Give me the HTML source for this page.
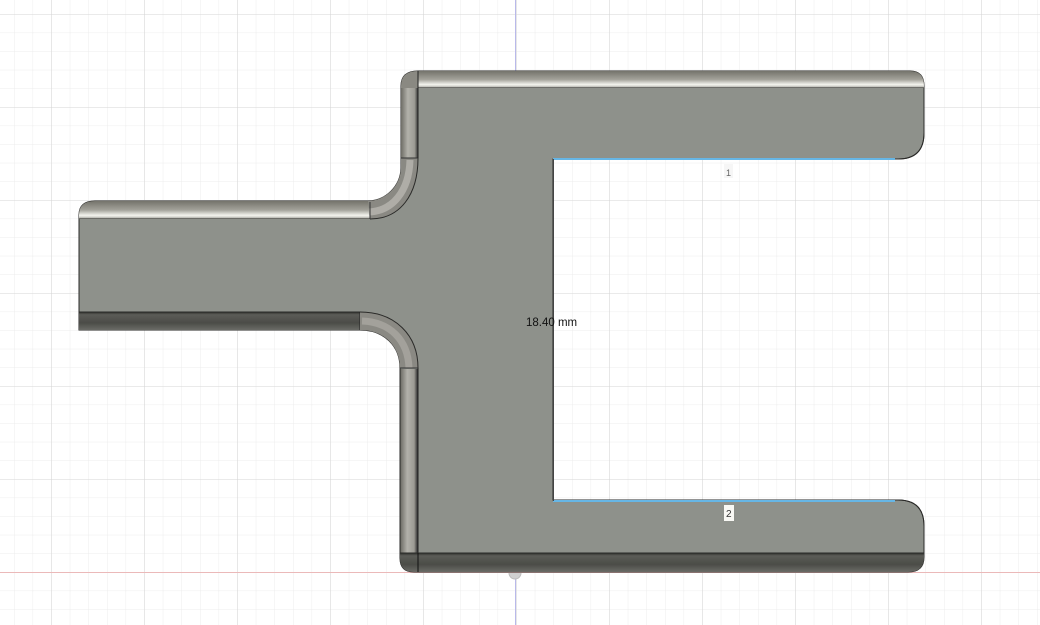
<!DOCTYPE html>
<html><head><meta charset="utf-8"><style>
html,body{margin:0;padding:0;background:#fff;width:1040px;height:625px;overflow:hidden}
svg{display:block}
</style></head><body>
<svg width="1040" height="625" viewBox="0 0 1040 625" xmlns="http://www.w3.org/2000/svg">
<defs>
<pattern id="minor" x="14" y="14" width="18.6" height="18.6" patternUnits="userSpaceOnUse">
<path d="M0 0H18.6M0 0V18.6" stroke="#ececec" stroke-width="1" fill="none"/>
</pattern>
<pattern id="major" x="51" y="14" width="93" height="93" patternUnits="userSpaceOnUse">
<path d="M0 0H93M0 0V93" stroke="#d6d6d6" stroke-width="1" fill="none"/>
</pattern>
<linearGradient id="topb" x1="0" y1="0" x2="0" y2="1">
<stop offset="0" stop-color="#74736b"/><stop offset="0.5" stop-color="#a3a29a"/><stop offset="0.8" stop-color="#f4f4ee"/><stop offset="0.92" stop-color="#c9c9c3"/><stop offset="1" stop-color="#3a3a36"/>
</linearGradient>
<linearGradient id="leftb" x1="0" y1="0" x2="1" y2="0">
<stop offset="0" stop-color="#6e6d66"/><stop offset="0.4" stop-color="#b2b1aa"/><stop offset="0.8" stop-color="#9c9b94"/><stop offset="1" stop-color="#333"/>
</linearGradient>
<linearGradient id="botb" x1="0" y1="0" x2="0" y2="1">
<stop offset="0" stop-color="#2f302c"/><stop offset="0.15" stop-color="#5b5c57"/><stop offset="0.6" stop-color="#4b4c47"/><stop offset="1" stop-color="#6a6b66"/>
</linearGradient>
</defs>
<rect width="1040" height="625" fill="#fff"/>
<rect width="1040" height="625" fill="url(#minor)"/>
<rect width="1040" height="625" fill="url(#major)"/>
<line x1="515.5" y1="0" x2="515.5" y2="625" stroke="#b9b9ea" stroke-width="1"/>
<line x1="0" y1="572.5" x2="1040" y2="572.5" stroke="#ebb9b9" stroke-width="1"/>

<!-- silhouette -->
<path d="M79 215 Q79 201 95 201 L368 201 A34 34 0 0 0 401 168 L401 86 Q401 71 418 71 L910 71 Q924 71 924 86 L924 133 Q924 159 898 159 L553 159 L553 500 L898 500 Q924 500 924 526 L924 557 Q924 572 908 572 L414 572 Q400 572 400 558 L400 368 C400 346 384 330 360 330 L79 330 Z" fill="#8e918b" stroke="#2a2a28" stroke-width="1"/>
<!-- left arm bottom band -->
<path d="M79 312 L360 312 L360 330 L79 330 Z" fill="url(#botb)"/>
<line x1="79" y1="312" x2="360" y2="312" stroke="#2a2a28"/>
<line x1="360" y1="312" x2="360" y2="330" stroke="#222"/>
<!-- lower fillet band -->
<path d="M360 312 C395 312 418 335 418 368 L400 368 C400 346 384 330 360 330 Z" fill="#8a8983"/>
<path d="M362 321 C390 322 408 340 409 368" fill="none" stroke="#a9a8a1" stroke-width="7" opacity="0.8"/>
<path d="M360 312 C395 312 418 335 418 368" fill="none" stroke="#2a2a28"/>
<line x1="400" y1="368" x2="418" y2="368" stroke="#333"/>
<!-- left arm top band -->
<path d="M79 219 L79 215 Q79 201 95 201 L370 201 L370 219 Z" fill="url(#topb)"/>
<!-- top fillet band -->
<path d="M368 201 A34 34 0 0 0 401 168 L401 158 L418 158 C418 195 400 219 370 219 Z" fill="#8a8983"/>
<path d="M369 212 C392 211 409 192 410 160" fill="none" stroke="#b8b7b0" stroke-width="7" opacity="0.8"/>
<path d="M418 158 C418 195 400 219 370 219" fill="none" stroke="#2a2a28"/>
<line x1="370" y1="202" x2="370" y2="219" stroke="#333"/>
<!-- vertical left band top -->
<rect x="401" y="86" width="17" height="72" fill="url(#leftb)"/>
<line x1="401" y1="158" x2="418" y2="158" stroke="#333"/>
<!-- top band -->
<path d="M418 71 L910 71 Q924 71 924 86 L924 88 L418 88 Z" fill="url(#topb)"/>
<path d="M401 88 L401 86 Q401 71 418 71 L418 88 Z" fill="#8a8982"/>
<!-- vertical left band bottom -->
<rect x="400.5" y="369" width="17" height="184" fill="url(#leftb)"/>
<line x1="418" y1="71" x2="418" y2="158" stroke="#222"/>
<line x1="418" y1="368" x2="418" y2="572" stroke="#222"/>
<!-- bottom band -->
<path d="M400 553 L924 553 L924 557 Q924 572 908 572 L414 572 Q400 572 400 558 Z" fill="url(#botb)"/>
<line x1="400" y1="553" x2="924" y2="553" stroke="#2a2a28"/>
<line x1="418" y1="553" x2="418" y2="572" stroke="#111"/>
<path d="M924 133 Q924 159 898 159 L553 159 L553 500 L898 500 Q924 500 924 526" fill="none" stroke="#2a2a28"/>

<!-- blue edges -->
<line x1="553" y1="159" x2="895" y2="159" stroke="#66b6e6" stroke-width="2"/>
<line x1="553" y1="501" x2="895" y2="501" stroke="#66b6e6" stroke-width="2"/>
<line x1="553.5" y1="159" x2="553.5" y2="501" stroke="#444" stroke-width="1"/>
<!-- labels -->
<rect x="724" y="164" width="9" height="14" fill="#f6f6f6"/>
<text x="726" y="176" font-family="Liberation Sans, sans-serif" font-size="9" fill="#666">1</text>
<rect x="724" y="505" width="10" height="16" fill="#f8f8f4"/>
<text x="726" y="517" font-family="Liberation Sans, sans-serif" font-size="10" fill="#333">2</text>
<text x="526" y="326" font-family="Liberation Sans, sans-serif" font-size="11.5" fill="#111">18.40 mm</text>
<!-- origin -->
<path d="M509 573 A6 6 0 0 0 521 573" fill="#d0d0d0" stroke="#bdbdbd"/>
</svg>
</body></html>
